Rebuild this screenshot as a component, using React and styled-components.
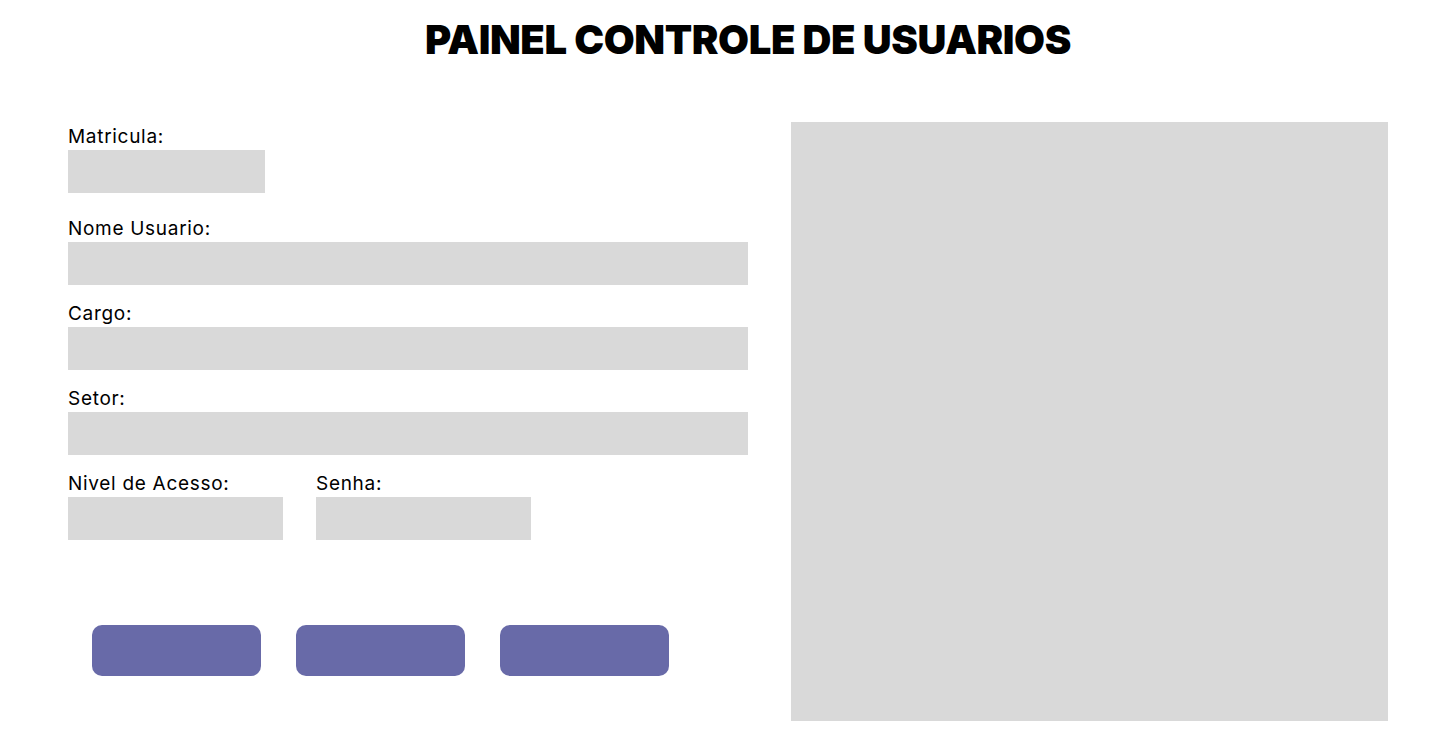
import React from "react";
import styled, { createGlobalStyle } from "styled-components";

const Global = createGlobalStyle`
  html, body { margin: 0; padding: 0; background: #ffffff; }
  body { font-family: "Inter", "Liberation Sans", sans-serif; color: #000; }
  * { box-sizing: border-box; }
`;

const Page = styled.div`
  width: 1440px;
  height: 750px;
  padding: 0 12px 0 68px;
  display: flex;
  flex-direction: column;
`;

const Header = styled.header`
  height: 122px;
  display: flex;
  justify-content: center;
  align-items: flex-start;
  padding-top: 15px;
`;

const Title = styled.h1`
  margin: 0;
  font-family: "Inter", "DejaVu Sans", sans-serif;
  font-weight: 900;
  font-size: 40px;
  line-height: 50px;
  letter-spacing: -0.4px;
  text-transform: uppercase;
`;

const Main = styled.main`
  display: grid;
  grid-template-columns: 680px 597px;
  column-gap: 43px;
  align-items: start;
`;

const Form = styled.form`
  display: flex;
  flex-direction: column;
  padding-top: 1px;
`;

const Field = styled.div`
  display: flex;
  flex-direction: column;
  width: ${(p) => p.$width || "100%"};
  margin-bottom: ${(p) => p.$gap ?? 15}px;
`;

const Label = styled.label`
  font-family: "Inter", "Liberation Sans", sans-serif;
  font-size: 19px;
  line-height: 27px;
  font-weight: 400;
  letter-spacing: 0.7px;
  color: #000;
`;

const Input = styled.input`
  width: 100%;
  height: 43px;
  border: none;
  outline: none;
  background: #d9d9d9;
  padding: 0 10px;
  font-size: 16px;
`;

const Row = styled.div`
  display: flex;
  gap: 33px;
`;

const Actions = styled.div`
  display: flex;
  gap: 35px;
  padding-left: 24px;
  margin-top: 85px;
`;

const Button = styled.button`
  width: 169px;
  height: 51px;
  border: none;
  border-radius: 10px;
  background: #686aa8;
  cursor: pointer;
`;

const Panel = styled.section`
  width: 597px;
  height: 599px;
  background: #d9d9d9;
`;

export default function App() {
  return (
    <>
      <Global />
      <Page>
        <Header>
          <Title>PAINEL CONTROLE DE USUARIOS</Title>
        </Header>
        <Main>
          <Form onSubmit={(e) => e.preventDefault()}>
            <Field $width="197px" $gap={22}>
              <Label>Matricula:</Label>
              <Input />
            </Field>
            <Field>
              <Label>Nome Usuario:</Label>
              <Input />
            </Field>
            <Field>
              <Label>Cargo:</Label>
              <Input />
            </Field>
            <Field>
              <Label>Setor:</Label>
              <Input />
            </Field>
            <Row>
              <Field $width="215px" $gap={0}>
                <Label>Nivel de Acesso:</Label>
                <Input />
              </Field>
              <Field $width="215px" $gap={0}>
                <Label>Senha:</Label>
                <Input type="password" />
              </Field>
            </Row>
            <Actions>
              <Button type="button" />
              <Button type="button" />
              <Button type="button" />
            </Actions>
          </Form>
          <Panel />
        </Main>
      </Page>
    </>
  );
}
